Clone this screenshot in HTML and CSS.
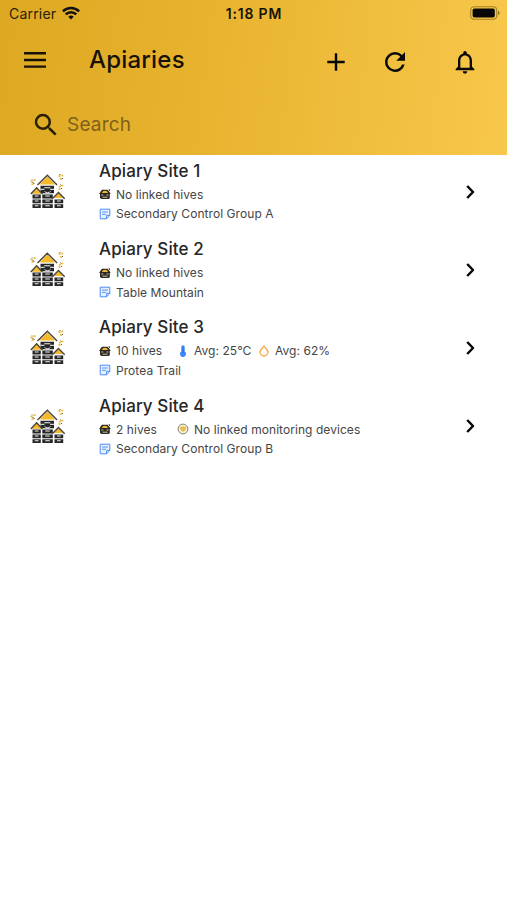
FILE: index.html
```html
<!DOCTYPE html>
<html lang="en">
<head>
<meta charset="utf-8">
<title>Apiaries</title>
<link rel="stylesheet" href="styles.css">
</head>
<body>
<svg class="defs" aria-hidden="true">
  <symbol id="site" viewBox="0 0 60 60">
    <path d="M20.500 25.800h13.500v7.500H20.500zM22.300 34.500h10.500v4H22.300zM22.300 39.500h10.500v3.800H22.300zM22.300 44.200h10.500v3.800H22.300zM12.500 34.500h8.300v4h-8.300zM12.500 39.500h8.300v3.800h-8.300zM12.500 44.200h8.300v3.800h-8.300zM34.500 39.500h8.700v3.800h-8.700zM34.500 44.200h8.700v3.800h-8.700z" fill="#262626"/>
    <path d="M27.300 16.500 35 24.500H19.600zM16.600 28.500l4.800 5.200h-9.600zM38.500 33l4.600 5h-9.200z" fill="#f5b929"/>
    <path d="M17.500 25l9.800-9.700 9.800 9.700M10.800 34l5.800-6.200 5.800 6.200M32.300 38.700l6.200-6.200 6.200 6.200" fill="none" stroke="#4a453c" stroke-width="1.400"/>
    <path d="M20.500 29.300h4M30 29.300h4" stroke="#fff" stroke-width="1"/>
    <path d="M24.300 27.700h6M25.300 36h4.500M25.300 41h4.500M25.300 45.700h4.500M14.800 36h3.700M14.800 41h3.700M14.800 45.700h3.700M37 41h3.700M37 45.700h3.700" stroke="#f1f1f1" stroke-width="1.100"/>
    <path d="M24.500 31.500c1.500 1.500 4.500 1.500 6 0" fill="none" stroke="#ddd" stroke-width="1"/>
    <g stroke="#eab83f" stroke-width="1.600"><path d="M10.500 21l2 1M14 20.500l1.500-1M11.500 24.500l2-.7M38.500 15.500l2 1M41.500 16l1.500-1M40 18.500l2 1M39 27l2-1M42 25l1 1M38.500 28.500l2 1"/></g>
    <g stroke="#665b43" stroke-width="1"><path d="M12 19.500l1 1M12.500 22.500l2 1M39.500 14l1 1M42 18l1 1M40.500 24.500l1 1M41 28l1 1"/></g>
  </symbol>
  <symbol id="hive" viewBox="0 0 12 12">
    <path d="M1 4.200 3 1.800h5.500l2.300 2.400v6L9.500 11h-7L1 10z" fill="#302b20"/>
    <path d="M3 5C3.300 2 8.500 2 8.900 5z" fill="#eabb32"/>
    <path d="M2.300 7h2M7.500 7h2M3.500 9.200h5" stroke="#d8d2c0" stroke-width=".9"/>
    <path d="M.3 5.500h11.200M10 1l.8 2" stroke="#2b271f" stroke-width=".9"/>
  </symbol>
  <symbol id="note" viewBox="0 0 12 12">
    <path d="M1.200 1.200h9.600v6.200l-3.200 3.400H1.200zM10.800 7.400H7.600v3.400" fill="#e8f0ff" stroke="#4b8bf5" stroke-width="1"/>
    <path d="M3 4h6M3 6.300h4" stroke="#4b8bf5" stroke-width=".9"/>
  </symbol>
  <symbol id="chev" viewBox="0 0 16 20"><path d="M4.200 4l5.800 6-5.800 6" fill="none" stroke="#080808" stroke-width="2.500" stroke-linejoin="round"/></symbol>
</svg>
<header class="header">
  <div class="status">
    <span class="carrier">Carrier</span>
    <svg class="wifi" viewBox="0 0 18 14"><path d="M9 13.500 6.300 10.700a3.900 3.900 0 0 1 5.400 0z" fill="#111"/><path d="M3.700 8.300a7.600 7.600 0 0 1 10.600 0M.9 5.300a11.600 11.600 0 0 1 16.200 0" fill="none" stroke="#111" stroke-width="2.500"/></svg>
    <span class="clock">1:18 PM</span>
    <svg class="battery" viewBox="0 0 30 14"><rect x=".7" y=".7" width="26" height="12.600" rx="3.500" fill="none" stroke="#a48225" stroke-width="1.100"/><rect x="2.600" y="2.500" width="22.200" height="9" rx="1.800" fill="#080808"/><path d="M28 4.800c2 .7 2 3.700 0 4.400z" fill="#8d7020"/></svg>
  </div>
  <div class="bar">
    <svg class="menu" viewBox="0 0 24 18"><path d="M1 2.300h22M1 9h22M1 15.600h22" stroke="#171207" stroke-width="2.400"/></svg>
    <h1>Apiaries</h1>
    <svg class="add" viewBox="0 0 24 24"><path d="M12 3.300v17.400M3.300 12h17.400" stroke="#080808" stroke-width="2.400"/></svg>
    <svg class="refresh" viewBox="0 0 24 24"><path d="M17.650 6.350A7.950 7.950 0 0 0 12 4a8 8 0 1 0 7.730 10h-2.080A6 6 0 1 1 12 6c1.660 0 3.140.69 4.220 1.780L13 11h7V4z" fill="#080808"/></svg>
    <svg class="bell" viewBox="0 0 24 24"><path d="M12 22a2 2 0 0 0 2-2h-4a2 2 0 0 0 2 2zm6-6v-5c0-3.070-1.630-5.640-4.500-6.320V4a1.500 1.500 0 0 0-3 0v.68C7.640 5.360 6 7.920 6 11v5l-2 2v1h16v-1zm-2 1H8v-6c0-2.480 1.510-4.500 4-4.500s4 2.020 4 4.500z" fill="#080808"/></svg>
  </div>
  <div class="search">
    <svg viewBox="0 0 24 24"><path d="M15.500 14h-.79l-.28-.27A6.471 6.471 0 0 0 16 9.500 6.500 6.500 0 1 0 9.500 16c1.610 0 3.090-.59 4.230-1.570l.27.280v.79l5 4.990L20.490 19zm-6 0a4.500 4.500 0 1 1 0-9 4.500 4.500 0 0 1 0 9z" fill="#2a1f07"/></svg>
    <span>Search</span>
  </div>
</header>
<main class="list">
  <article class="row">
    <svg class="site"><use href="#site"/></svg>
    <div class="info">
      <h2>Apiary Site 1</h2>
      <p><svg class="ico"><use href="#hive"/></svg><span>No linked hives</span></p>
      <p><svg class="ico"><use href="#note"/></svg><span>Secondary Control Group A</span></p>
    </div>
    <svg class="chev"><use href="#chev"/></svg>
  </article>
  <article class="row">
    <svg class="site"><use href="#site"/></svg>
    <div class="info">
      <h2>Apiary Site 2</h2>
      <p><svg class="ico"><use href="#hive"/></svg><span>No linked hives</span></p>
      <p><svg class="ico"><use href="#note"/></svg><span>Table Mountain</span></p>
    </div>
    <svg class="chev"><use href="#chev"/></svg>
  </article>
  <article class="row">
    <svg class="site"><use href="#site"/></svg>
    <div class="info">
      <h2>Apiary Site 3</h2>
      <p><svg class="ico"><use href="#hive"/></svg><span class="count">10 hives</span>
        <svg class="ico" viewBox="0 0 12 12"><path d="M4.300 2a1.700 1.700 0 0 1 3.400 0v4.600a2.900 2.900 0 1 1-3.400 0z" fill="#3f86f7"/><path d="M6 3v5" stroke="#256add"/></svg><span class="temp">Avg: 25°C</span>
        <svg class="ico" viewBox="0 0 12 12"><path d="M6 1.300C4.500 3 2 5 2 7a4 4 0 0 0 8 0c0-2-2.500-4-4-5.700z" fill="none" stroke="#f7ac48" stroke-width="1.400"/></svg><span>Avg: 62%</span></p>
      <p><svg class="ico"><use href="#note"/></svg><span>Protea Trail</span></p>
    </div>
    <svg class="chev"><use href="#chev"/></svg>
  </article>
  <article class="row">
    <svg class="site"><use href="#site"/></svg>
    <div class="info">
      <h2>Apiary Site 4</h2>
      <p><svg class="ico"><use href="#hive"/></svg><span class="count">2 hives</span>
        <svg class="ico" viewBox="0 0 12 12"><circle cx="6" cy="6" r="4.900" fill="#fbf3d8" stroke="#77736b" stroke-width=".9"/><path d="M2.500 4.300 6 3.200l3.500 1.100L8 7.500 6 9 4 7.500z" fill="#e5bd52"/></svg><span>No linked monitoring devices</span></p>
      <p><svg class="ico"><use href="#note"/></svg><span>Secondary Control Group B</span></p>
    </div>
    <svg class="chev"><use href="#chev"/></svg>
  </article>
</main>
</body>
</html>
```
FILE: styles.css
```css
* { box-sizing: border-box; }
body { margin: 0; min-height: 900px; background: #fff; font-family: Inter, "Liberation Sans", sans-serif; }
h1, h2, p { margin: 0; }
svg { display: block; flex: none; }
.defs { position: absolute; width: 0; height: 0; }
.header { height: 154.500px; background: linear-gradient(97deg, #dda922 0%, #eab633 50%, #f8c84c 100%); }
.status { display: grid; grid-template-columns: 53px 1fr auto 1fr 53px; align-items: center; height: 27px; padding: 0 7px 0 9px; color: #171207; }
.carrier { font-size: 14px; letter-spacing: .2px; white-space: nowrap; color: #2c2108; }
.wifi { width: 18px; height: 14px; margin-top: -1px; }
.clock { font-size: 14px; font-weight: 600; letter-spacing: .8px; margin-right: 1px; }
.battery { grid-column: 5; justify-self: end; width: 30px; height: 14px; margin-top: -1px; }
.bar { display: flex; align-items: center; height: 68px; padding-left: 23px; }
.menu { width: 24px; height: 18px; margin-bottom: 2px; }
h1 { width: 235px; margin: 0 0 2px 42px; font-size: 24px; line-height: 30px; font-weight: 500; letter-spacing: .2px; color: #171207; }
.add { width: 24px; height: 24px; margin-top: 2px; }
.refresh { width: 30px; height: 30px; margin: 2px 0 0 32px; }
.bell { width: 28px; height: 28px; margin: 2px 0 0 41px; }
.search { display: flex; align-items: center; height: 59px; padding-left: 31px; font-size: 19px; letter-spacing: .2px; color: #80601a; }
.search svg { width: 30px; height: 30px; margin-right: 6px; }
.row { display: grid; grid-template-columns: 79px 1fr 16px; height: 78.200px; padding: 4.500px 31px 0 20px; }
.site { width: 60px; height: 60px; margin-top: 1px; }
.info { min-width: 0; }
h2 { margin-bottom: 1.700px; font-size: 17px; line-height: 24px; font-weight: 500; letter-spacing: .1px; color: #262626; }
p { display: flex; align-items: center; height: 19.500px; font-size: 12px; letter-spacing: .06px; white-space: nowrap; color: #454545; }
.ico { width: 12px; height: 12px; margin-right: 5px; }
.count { width: 61px; }
.temp { width: 64px; }
.chev { width: 16px; height: 20px; margin: 22.500px 0 0 3px; }
```
